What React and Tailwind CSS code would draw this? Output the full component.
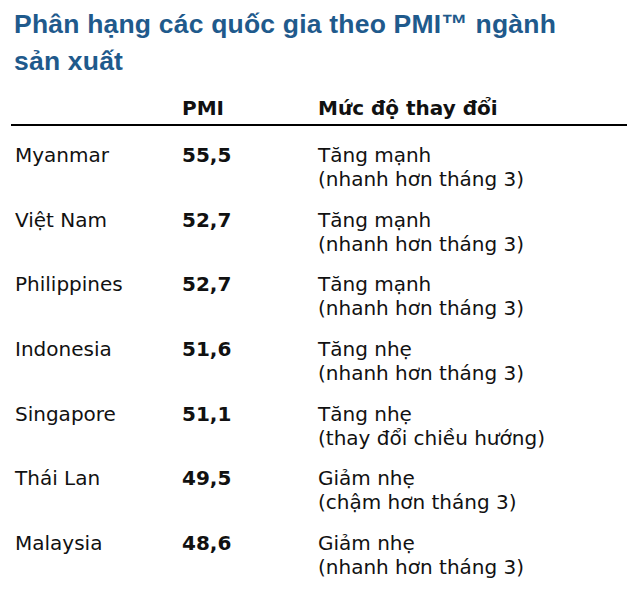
const ROWS = [
  { country: "Myanmar", pmi: "55,5", trend: "Tăng mạnh", note: "(nhanh hơn tháng 3)" },
  { country: "Việt Nam", pmi: "52,7", trend: "Tăng mạnh", note: "(nhanh hơn tháng 3)" },
  { country: "Philippines", pmi: "52,7", trend: "Tăng mạnh", note: "(nhanh hơn tháng 3)" },
  { country: "Indonesia", pmi: "51,6", trend: "Tăng nhẹ", note: "(nhanh hơn tháng 3)" },
  { country: "Singapore", pmi: "51,1", trend: "Tăng nhẹ", note: "(thay đổi chiều hướng)" },
  { country: "Thái Lan", pmi: "49,5", trend: "Giảm nhẹ", note: "(chậm hơn tháng 3)" },
  { country: "Malaysia", pmi: "48,6", trend: "Giảm nhẹ", note: "(nhanh hơn tháng 3)" },
];

export default function App() {
  return (
    <div className="w-[638px] h-[599px] bg-white overflow-hidden">
      <h1 className="pt-[6px] pl-[14px] text-[26.5px] tracking-[0.2px] leading-[37px] font-bold text-[#1f5a8c] font-['Liberation_Sans',Arial,sans-serif]">
        Phân hạng các quốc gia theo PMI™ ngành
        <br />
        sản xuất
      </h1>

      <div className="mt-[16px] font-['DejaVu_Sans',Verdana,sans-serif] text-[20px] leading-[24px] text-[#111]">
        {/* header */}
        <div className="mx-[11px] pb-[4px] border-b-[2px] border-black grid grid-cols-[167px_136px_1fr] font-bold">
          <div />
          <div className="pl-[4px]">PMI</div>
          <div className="pl-[4px]">Mức độ thay đổi</div>
        </div>

        <div className="pt-[17px] pl-[15px] flex flex-col gap-[16.67px]">
          {ROWS.map((r) => (
            <div key={r.country} className="grid grid-cols-[167px_136px_1fr]">
              <div>{r.country}</div>
              <div className="font-bold">{r.pmi}</div>
              <div>
                {r.trend}
                <br />
                {r.note}
              </div>
            </div>
          ))}
        </div>
      </div>
    </div>
  );
}
